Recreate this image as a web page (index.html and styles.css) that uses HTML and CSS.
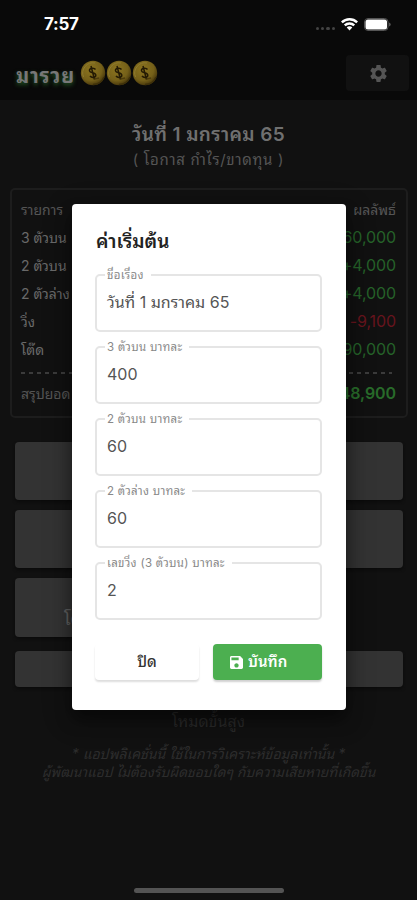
FILE: index.html
```html
<!DOCTYPE html>
<html lang="th">
<head>
<meta charset="utf-8">
<title>มารวย</title>
<link rel="stylesheet" href="styles.css">
</head>
<body>
<svg class="defs" width="0" height="0">
  <defs>
    <radialGradient id="gold" cx="40%" cy="35%" r="65%">
      <stop offset="0" stop-color="#8b741f"/>
      <stop offset=".7" stop-color="#756019"/>
      <stop offset="1" stop-color="#4c3b0d"/>
    </radialGradient>
    <symbol id="coin" viewBox="0 0 26 26">
      <circle cx="13" cy="13" r="12.2" fill="url(#gold)"/>
      <path d="M3.5 17A10.3 10.3 0 0 1 15 3" fill="none" stroke="#8f7c30" stroke-width="1"/>
      <path d="M13 24.500A12 12 0 0 0 24 17" fill="none" stroke="#3e300a" stroke-width="1.500"/>
      <path d="M15.500 9.500C14 7.500 9 8 9.500 10.800C10 13.300 15.800 12.300 15.800 15.300C15.800 18 11.500 18 10 16M11 6L14.500 19.500" fill="none" stroke="#241a04" stroke-width="1.500"/>
      <path d="M14.500 19L19 18" stroke="#4c3b0d" stroke-width="1.500"/>
    </symbol>
  </defs>
</svg>
<div class="screen">
  <header class="top">
    <div class="status">
      <span class="time">7:57</span>
      <div class="signals">
        <span class="dots"><i></i><i></i><i></i><i></i></span>
        <svg class="wifi" viewBox="0 0 17 13"><path d="M8.500 0C5.200 0 2.200 1.300 0 3.400L1.700 5.200A9.800 9.800 0 0 1 15.300 5.200L17 3.400A12.300 12.300 0 0 0 8.500 0ZM8.500 4.200A8 8 0 0 0 2.900 6.500L4.600 8.300A5.600 5.600 0 0 1 12.400 8.300L14.100 6.500A8 8 0 0 0 8.500 4.200ZM8.500 8.200A4 4 0 0 0 5.700 9.400L8.500 12.600L11.300 9.400A4 4 0 0 0 8.500 8.200Z" fill="#fff"/></svg>
        <svg class="battery" viewBox="0 0 27 13"><rect x=".5" y=".5" width="23.500" height="12" rx="3.500" fill="none" stroke="#555"/><rect x="1.500" y="1.500" width="21.500" height="10" rx="2.500" fill="#fff"/><path d="M25.200 4.500V8.500Q26.600 8 26.600 6.500T25.200 4.500Z" fill="#666"/></svg>
      </div>
    </div>
    <div class="bar">
      <span class="brand">มารวย</span>
      <span class="coins"><svg><use href="#coin"/></svg><svg><use href="#coin"/></svg><svg><use href="#coin"/></svg></span>
      <span class="gear"><svg viewBox="0 0 24 24"><path fill="#555" d="M19.140 12.940c.04-.3.060-.61.060-.94 0-.32-.02-.64-.07-.94l2.030-1.580c.18-.14.230-.41.120-.61l-1.920-3.320c-.12-.22-.37-.29-.59-.22l-2.390.96c-.5-.38-1.030-.7-1.620-.94l-.36-2.540c-.04-.24-.24-.41-.48-.41h-3.840c-.24 0-.43.170-.47.410l-.36 2.540c-.59.240-1.130.570-1.620.940l-2.390-.96c-.22-.08-.47 0-.59.220L2.740 8.870c-.12.210-.08.470.120.610l2.030 1.580c-.05.3-.09.630-.09.940s.020.640.070.940l-2.030 1.580c-.18.140-.23.410-.12.610l1.920 3.320c.12.220.37.290.59.220l2.390-.96c.5.380 1.030.7 1.620.94l.36 2.540c.05.240.24.410.48.410h3.840c.24 0 .44-.17.470-.41l.36-2.540c.59-.24 1.130-.56 1.620-.94l2.390.96c.22.080.47 0 .59-.22l1.920-3.320c.12-.22.070-.47-.12-.61l-2.010-1.580zM12 15.600c-1.980 0-3.600-1.620-3.600-3.600s1.620-3.600 3.600-3.600 3.600 1.620 3.600 3.600-1.620 3.600-3.600 3.600z"/></svg></span>
    </div>
  </header>
  <main class="content">
    <h1>วันที่ 1 มกราคม 65</h1>
    <p class="sub">( โอกาส กำไร/ขาดทุน )</p>
    <section class="summary">
      <div class="row head"><span>รายการ</span><span>ผลลัพธ์</span></div>
      <div class="row"><span>3 ตัวบน</span><b>+360,000</b></div>
      <div class="row"><span>2 ตัวบน</span><b>+4,000</b></div>
      <div class="row"><span>2 ตัวล่าง</span><b>+4,000</b></div>
      <div class="row"><span>วิ่ง</span><b class="loss">-9,100</b></div>
      <div class="row"><span>โต๊ด</span><b>+90,000</b></div>
      <div class="dash"></div>
      <div class="row total"><span>สรุปยอด</span><b>+448,900</b></div>
    </section>
    <div class="tiles">
      <div class="tile wide"></div>
      <div class="tile wide"></div>
      <div class="tile labelled">โต๊ด</div>
      <div class="tile wide short"></div>
    </div>
    <p class="mode">โหมดขั้นสูง</p>
    <p class="note">* แอปพลิเคชั่นนี้ ใช้ในการวิเคราะห์ข้อมูลเท่านั้น *</p>
    <p class="note second">ผู้พัฒนาแอป ไม่ต้องรับผิดชอบใดๆ กับความเสียหายที่เกิดขึ้น</p>
  </main>
  <div class="home"></div>
  <div class="dialog">
    <h2>ค่าเริ่มต้น</h2>
    <fieldset><legend><span>ชื่อเรื่อง</span></legend><div class="value">วันที่ 1 มกราคม 65</div></fieldset>
    <fieldset><legend><span>3 ตัวบน บาทละ</span></legend><div class="value">400</div></fieldset>
    <fieldset><legend><span>2 ตัวบน บาทละ</span></legend><div class="value">60</div></fieldset>
    <fieldset><legend><span>2 ตัวล่าง บาทละ</span></legend><div class="value">60</div></fieldset>
    <fieldset><legend><span>เลขวิ่ง (3 ตัวบน) บาทละ</span></legend><div class="value">2</div></fieldset>
    <div class="actions">
      <button class="close">ปิด</button>
      <button class="save"><svg viewBox="3 3 18 18"><path fill="#fff" d="M17 3H5c-1.110 0-2 .9-2 2v14c0 1.100.89 2 2 2h14c1.100 0 2-.9 2-2V7l-4-4zm-5 16c-1.660 0-3-1.340-3-3s1.340-3 3-3 3 1.340 3 3-1.340 3-3 3zm3-10H5V5h10v4z"/></svg>บันทึก</button>
    </div>
  </div>
</div>
</body>
</html>
```

FILE: styles.css
```css
* { box-sizing: border-box; }
body { margin: 0; background: #111; font-family: Inter, "Noto Sans Thai Looped", Loma, Garuda, Waree, "Noto Sans", sans-serif; }
h1, h2, p { margin: 0; font-weight: 400; white-space: nowrap; }
.defs { display: block; position: absolute; }
.screen { position: relative; width: 417px; height: 900px; overflow: hidden; background: #111; display: flex; flex-direction: column; }
.top { height: 100px; background: #090909; flex: none; }
.status { height: 48px; padding: 0 26px 0 44px; display: flex; justify-content: space-between; align-items: center; }
.time { color: #fff; font-size: 17px; font-weight: 700; line-height: 20px; letter-spacing: -.3px; }
.signals { display: flex; align-items: center; }
.dots { display: flex; gap: 2px; margin: 9px 6px 0 0; }
.dots i { width: 3.300px; height: 3px; border-radius: 2px; background: #444; }
.wifi { width: 17px; height: 13px; margin-right: 6px; }
.battery { width: 27px; height: 13px; }
.bar { display: flex; height: 52px; padding-left: 16px; align-items: flex-start; }
.brand { width: 64px; margin-top: 14px; font-size: 20px; letter-spacing: .8px; line-height: 28px; font-weight: 700; color: #777; text-shadow: 0 2px 4px #245a24; white-space: nowrap; }
.coins { display: flex; margin-top: 12px; }
.coins svg { width: 26px; height: 26px; }
.gear { width: 63px; height: 36px; margin: 7px 8px 0 auto; border-radius: 4px; background: #111; display: flex; align-items: center; justify-content: center; }
.gear svg { width: 21px; height: 21px; margin-left: 1px; }
.content { display: flex; flex-direction: column; }
.content h1 { margin-top: 20px; height: 28px; line-height: 29px; font-size: 19px; letter-spacing: .35px; font-weight: 600; text-align: center; color: #707070; }
.sub { height: 24px; line-height: 24px; font-size: 15px; letter-spacing: .7px; text-align: center; color: #555; }
.summary { margin: 16px 9px 0 10px; height: 230px; border: 2px solid #1d1d1d; border-radius: 5px; padding: 6px 10px 0 9px; font-size: 14px; }
.row { display: flex; justify-content: space-between; height: 28px; line-height: 28px; color: #696969; white-space: nowrap; }
.row b { font-size: 16px; font-weight: 400; line-height: 26px; letter-spacing: -.1px; color: #256229; }
.row b.loss { color: #67141d; }
.head { color: #555; }
.dash { height: 2px; margin: 8px 4px 6px 0; background: repeating-linear-gradient(90deg, #3b3b3b 0 4px, transparent 4px 8px); }
.total { color: #555; }
.row.total b { font-weight: 600; color: #286b2a; }
.tiles { display: grid; grid-template-columns: repeat(3, 1fr); gap: 10px; padding: 24px 14px 0 15px; }
.tile { height: 58px; border-radius: 4px; background: #333; box-shadow: 0 2px 3px #0b0b0b; }
.wide { grid-column: 1 / -1; }
.labelled { grid-column: 1; height: 59px; padding: 26px 0 0 5px; text-align: center; font-size: 18px; line-height: 30px; color: #606060; }
.short { height: 36px; margin-top: 4px; }
.mode { margin-top: 20px; height: 28px; line-height: 28px; font-size: 16px; text-align: center; color: #2a2a2a; }
.note { margin-top: 9px; height: 19px; line-height: 19px; font-size: 14px; font-style: italic; text-align: center; color: #2d2d2d; }
.note.second { margin-top: 0; font-size: 13.750px; }
.home { position: absolute; left: 134px; bottom: 7px; width: 150px; height: 5px; border-radius: 3px; background: #545454; }
.dialog { position: absolute; left: 72px; top: 204px; width: 274px; height: 506px; padding: 24px 24px 0 23px; border-radius: 4px; background: #fff; box-shadow: 0 10px 16px rgba(0,0,0,.4), 0 8px 30px rgba(0,0,0,.25); display: flex; flex-direction: column; }
.dialog h2 { height: 28px; line-height: 28px; margin-bottom: 12px; padding-left: 1px; font-size: 19px; font-weight: 600; color: #222; }
fieldset { min-width: 0; margin: 0 0 8px; height: 64px; padding: 0 10px; border: 2px solid #e5e5e5; border-radius: 5px; flex: none; }
legend { height: 14px; margin-left: -2px; padding: 0 7px 0 2px; font-size: 11.500px; letter-spacing: .3px; line-height: 14px; color: #888; white-space: nowrap; }
.value { height: 26px; margin-top: 7px; font-size: 16px; line-height: 26px; color: #555; white-space: nowrap; }
.actions { display: flex; gap: 14px; margin-top: 16px; }
button { height: 36px; border: 0; border-radius: 4px; padding: 0; font: 500 15px/36px Inter, "Noto Sans Thai Looped", Loma, Garuda, Waree, "Noto Sans", sans-serif; }
.close { width: 104px; background: #fff; color: #333; box-shadow: 0 2px 2px #dedede; }
.save { flex: 1; display: flex; align-items: center; gap: 5px; padding-left: 17px; background: #4caf50; color: #fff; font-weight: 600; box-shadow: 0 2px 2px #d0d0d0; }
.save svg { width: 13px; height: 13px; }
```
